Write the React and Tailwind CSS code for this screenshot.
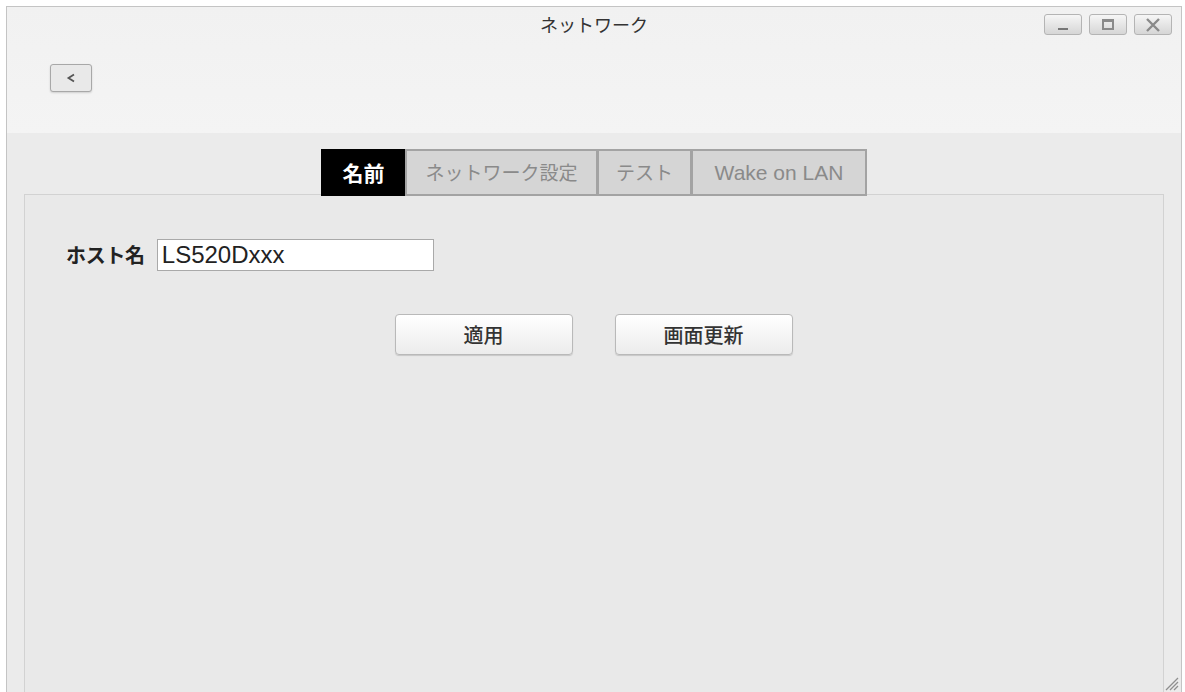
const jp = { fontFamily: '"Noto Sans CJK JP", "Noto Sans", sans-serif' };
const latin = { fontFamily: '"Liberation Sans", Arial, sans-serif' };

const tabs = ["名前", "ネットワーク設定", "テスト", "Wake on LAN"];
const tabWidths = ["w-[85px]", "w-[193px]", "w-[95px]", "w-[176px]"];

function WinButton({ children }) {
  return (
    <div className="flex h-[21px] w-[38px] items-center justify-center rounded-[3px] border border-[#b4b4b4] bg-gradient-to-b from-[#f6f6f6] to-[#d6d6d6]">
      {children}
    </div>
  );
}

function ActionButton({ label }) {
  return (
    <button
      className="h-[41px] w-[178px] rounded-[4px] border border-[#b9b9b9] bg-gradient-to-b from-[#ffffff] to-[#ececec] text-[20px] font-medium text-[#333] shadow-[0_1px_1px_rgba(0,0,0,0.15)]"
      style={jp}
    >
      {label}
    </button>
  );
}

export default function App() {
  return (
    <div className="h-[692px] w-[1185px] overflow-hidden bg-white pl-[6px] pr-[3px] pt-[6px]" style={jp}>
      <div className="relative flex h-[686px] flex-col border border-[#c4c4c4] border-b-0">
        {/* title bar and back button */}
        <div className="relative h-[126px] bg-gradient-to-b from-[#f1f1f1] to-[#f4f4f4]">
          <div className="pt-[4px] text-center text-[18px] text-[#333]">ネットワーク</div>
          <div className="absolute right-[9px] top-[7px] flex gap-[7px]">
            <WinButton>
              <div className="mt-[8px] h-[2px] w-[10px] bg-[#777]" />
            </WinButton>
            <WinButton>
              <div className="h-[11px] w-[12px] border-2 border-t-[3px] border-[#8a8a8a]" />
            </WinButton>
            <WinButton>
              <svg width="16" height="14" viewBox="0 0 16 14">
                <path d="M2 1 L14 13 M14 1 L2 13" stroke="#8a8a8a" strokeWidth="2.4" />
              </svg>
            </WinButton>
          </div>
          <div className="ml-[43px] mt-[26px] flex h-[28px] w-[42px] items-center justify-center rounded-[3px] border border-[#a8a8a8] bg-[#e9e9e9] shadow-[0_1px_2px_rgba(0,0,0,0.15)]">
            <svg width="12" height="12" viewBox="0 0 12 12">
              <path d="M9 2.5 L3.5 6 L9 9.5" stroke="#555" strokeWidth="1.8" fill="none" />
            </svg>
          </div>
        </div>

        {/* tab strip and settings panel */}
        <div className="flex flex-1 flex-col bg-[#ebebeb] pt-[16px]">
          <div className="relative z-10 flex justify-center">
            {tabs.map((t, i) =>
              i === 0 ? (
                <div key={t} className={`flex h-[47px] items-center justify-center bg-black text-[21px] font-bold text-white ${tabWidths[i]}`}>
                  {t}
                </div>
              ) : (
                <div
                  key={t}
                  className={`-ml-px flex h-[47px] items-center justify-center border-2 border-[#a3a3a3] bg-[#d5d5d5] text-[#8a8a8a] ${i === 3 ? "text-[21px]" : "text-[19px]"} ${tabWidths[i]}`}
                  style={i === 3 ? latin : undefined}
                >
                  {t}
                </div>
              )
            )}
          </div>
          <div className="-mt-[2px] ml-[17px] w-[1140px] flex-1 border border-b-0 border-[#d2d2d2] bg-[#e9e9e9]">
            <div className="ml-[41px] mt-[44px] flex items-center gap-[12px]">
              <span className="text-[20px] font-bold tracking-[-0.3px] text-[#222]">ホスト名</span>
              <div className="flex h-[32px] w-[277px] items-center border border-[#a9a9a9] bg-white pl-[4px] text-[24px] text-[#222]" style={latin}>
                LS520Dxxx
              </div>
            </div>
            <div className="mt-[43px] flex justify-center gap-[42px] pr-[1px]">
              <ActionButton label="適用" />
              <ActionButton label="画面更新" />
            </div>
          </div>
        </div>

        {/* resize grip */}
        <svg className="absolute bottom-[1px] right-[2px]" width="16" height="16" viewBox="0 0 16 16">
          <path d="M15 3 L3 15 M15 7 L7 15 M15 11 L11 15" stroke="#8f8f8f" strokeWidth="1.3" />
        </svg>
      </div>
    </div>
  );
}
